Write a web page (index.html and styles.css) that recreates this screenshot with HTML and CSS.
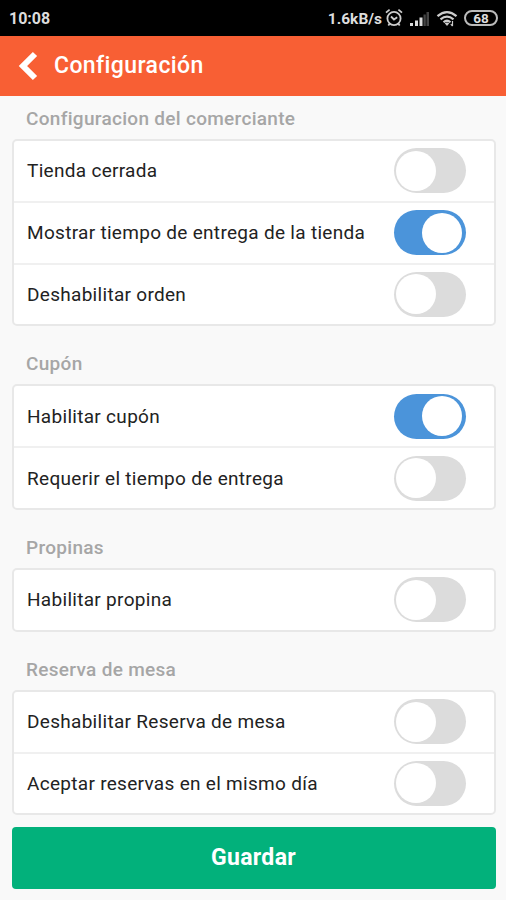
FILE: index.html
```html
<!DOCTYPE html>
<html lang="es">
<head>
    <meta charset="utf-8">
    <title>Configuración</title>
    <link rel="stylesheet" href="styles.css">
</head>
<body>
    <div class="status-bar">
        <span class="clock">10:08</span>
        <div class="status-icons">
            <span class="speed">1.6kB/s</span>
            <svg class="alarm" width="18" height="20" viewBox="0 0 18 20" fill="none" stroke="#ccc" stroke-width="1.8">
                <circle cx="9" cy="10.5" r="6.6"/>
                <path d="M1 4.6 4.6 1.6M17 4.6 13.4 1.6M6 8.5l3 3 3.2-2.2M4.8 15.5l-1.5 2M13.2 15.5l1.5 2"/>
            </svg>
            <svg class="signal" width="20" height="16" viewBox="0 0 20 16" fill="#ddd">
                <path d="M0 12h3v3H0zM5 9.5h3V15H5zM9.5 6.5h3V15h-3z"/>
                <path fill="#444" d="M13.5 3.5h2.3V15h-2.3zM16.5 1H19v14h-2.5z"/>
            </svg>
            <svg class="wifi" width="22" height="18" viewBox="0 0 22 18" fill="none" stroke="#ccc" stroke-width="2.2">
                <path d="M1.5 6.2Q11-1.8 20.5 6.2M4.5 9.4Q11 3.8 17.5 9.4M7.5 12.3Q11 9.2 14.5 12.3"/>
                <path fill="#ccc" stroke="none" d="M8.7 13.2Q11 11.8 13.3 13.2L11 16z"/>
                <path stroke-width="1.2" d="M16.5 11v5M14.8 14.2l1.7 1.9"/>
            </svg>
            <span class="battery">68</span>
        </div>
    </div>

    <div class="header">
        <svg class="back" width="20" height="30" viewBox="0 0 20 30" fill="none" stroke="#fff" stroke-width="6">
            <path d="M17 3 5 15l12 12"/>
        </svg>
        <h1>Configuración</h1>
    </div>

    <div class="content">
        <h2>Configuracion del comerciante</h2>
        <div class="card">
            <div class="row"><span>Tienda cerrada</span><div class="toggle"></div></div>
            <div class="row"><span>Mostrar tiempo de entrega de la tienda</span><div class="toggle on"></div></div>
            <div class="row"><span>Deshabilitar orden</span><div class="toggle"></div></div>
        </div>

        <h2>Cupón</h2>
        <div class="card">
            <div class="row"><span>Habilitar cupón</span><div class="toggle on"></div></div>
            <div class="row"><span>Requerir el tiempo de entrega</span><div class="toggle"></div></div>
        </div>

        <h2>Propinas</h2>
        <div class="card">
            <div class="row"><span>Habilitar propina</span><div class="toggle"></div></div>
        </div>

        <h2>Reserva de mesa</h2>
        <div class="card">
            <div class="row"><span>Deshabilitar Reserva de mesa</span><div class="toggle"></div></div>
            <div class="row"><span>Aceptar reservas en el mismo día</span><div class="toggle"></div></div>
        </div>

        <button class="save">Guardar</button>
    </div>
</body>
</html>
```
FILE: styles.css
```css
* {
    box-sizing: border-box;
}
body {
    margin: 0;
    height: 900px;
    overflow: hidden;
    background: #f9f9f9;
    font-family: Roboto, sans-serif;
    color: #222;
}
.status-bar {
    display: flex;
    align-items: center;
    justify-content: space-between;
    height: 36px;
    padding: 0 8px 0 9px;
    background: #000;
    color: #ddd;
    font-weight: 700;
    font-size: 16px;
}
.clock {
    padding-top: 1px;
}
.status-icons {
    display: flex;
    align-items: center;
}
.speed {
    padding-top: 1px;
    font-size: 15.5px;
}
.alarm {
    margin-left: 3px;
}
.signal {
    margin: 1px 0 0 7px;
}
.wifi {
    margin: 1px 0 0 6px;
}
.battery {
    width: 34px;
    height: 16px;
    margin-left: 6px;
    border: 2px solid #bbb;
    border-radius: 8px;
    font-size: 13.5px;
    line-height: 12px;
    text-align: center;
}
.header {
    display: flex;
    align-items: center;
    height: 60px;
    padding-left: 18px;
    background: #f85f34;
    color: #fff;
}
.header h1 {
    margin: 0 0 2px 16px;
    font-size: 23px;
    font-weight: 500;
    letter-spacing: 0.4px;
}
.back {
    margin-bottom: 1px;
}
.content {
    padding: 0 10.5px 0 11.5px;
}
h2 {
    height: 58px;
    margin: 0;
    padding: 26px 0 0 14.5px;
    font-size: 19px;
    font-weight: 500;
    line-height: 24px;
    letter-spacing: 0.3px;
    color: #a6a6a6;
}
h2:first-child {
    height: 43px;
    padding-top: 11px;
}
.card {
    background: #fff;
    border: 2px solid #e8e8e8;
    border-radius: 5px;
}
.row {
    display: flex;
    align-items: center;
    justify-content: space-between;
    height: 59.8px;
    padding: 0 28px 0 13.5px;
    font-size: 19px;
    letter-spacing: 0.3px;
}
.row + .row {
    height: 61.8px;
    border-top: 2px solid #f0f0f0;
}
.toggle {
    width: 72px;
    height: 45px;
    padding: 2.5px;
    border-radius: 23px;
    background: #dcdcdc;
}
.toggle::before {
    content: "";
    display: block;
    width: 40px;
    height: 40px;
    border-radius: 50%;
    background: #fff;
}
.toggle.on {
    padding-right: 4px;
    background: #4b94da;
}
.toggle.on::before {
    margin-left: auto;
}
.save {
    display: block;
    width: 100%;
    height: 62px;
    margin-top: 11.5px;
    border: 0;
    border-radius: 4px;
    background: #02b17b;
    color: #fff;
    font-family: inherit;
    font-size: 23px;
    font-weight: 700;
    letter-spacing: 0.35px;
}
```
